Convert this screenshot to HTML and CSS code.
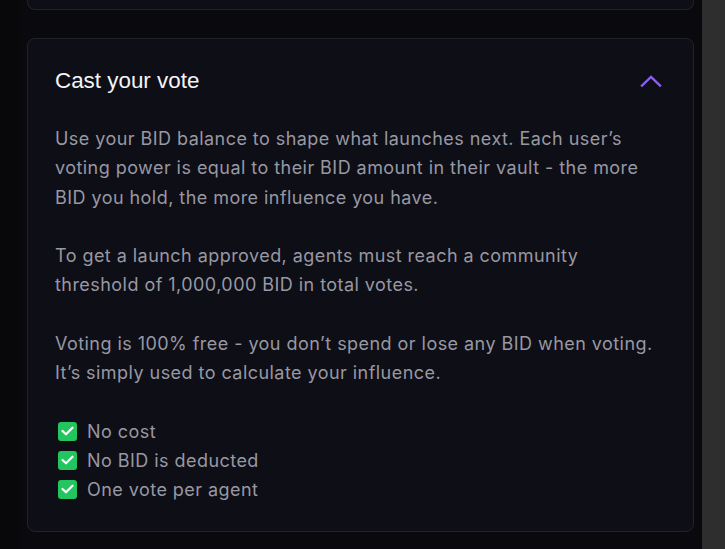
FILE: index.html
```html
<!DOCTYPE html>
<html lang="en">
<head>
<meta charset="utf-8">
<title>Cast your vote</title>
<link rel="stylesheet" href="styles.css">
</head>
<body>
<div class="page">
  <main class="main">
    <div class="card card-prev"></div>
    <section class="card vote">
      <header class="vote-head">
        <h2 class="vote-title">Cast your vote</h2>
        <button class="toggle" aria-label="Collapse">
          <svg width="22" height="14" viewBox="0 0 22 14" fill="none"><path d="M2 11.5 L11 3 L20 11.5" stroke="#8b5cf6" stroke-width="2.4" stroke-linecap="square"/></svg>
        </button>
      </header>
      <div class="vote-body">
        <p>Use your BID balance to shape what launches next. Each user’s voting power is equal to their BID amount in their vault - the more BID you hold, the more influence you have.</p>
        <p>To get a launch approved, agents must reach a community threshold of 1,000,000 BID in total votes.</p>
        <p>Voting is 100% free - you don’t spend or lose any BID when voting. It’s simply used to calculate your influence.</p>
        <ul class="checks">
          <li><span class="check"><svg width="13" height="10" viewBox="0 0 13 10" fill="none"><path d="M1.5 5 L5 8.3 L11.5 1.7" stroke="#fff" stroke-width="2.2" stroke-linecap="round" stroke-linejoin="round"/></svg></span>No cost</li>
          <li><span class="check"><svg width="13" height="10" viewBox="0 0 13 10" fill="none"><path d="M1.5 5 L5 8.3 L11.5 1.7" stroke="#fff" stroke-width="2.2" stroke-linecap="round" stroke-linejoin="round"/></svg></span>No BID is deducted</li>
          <li><span class="check"><svg width="13" height="10" viewBox="0 0 13 10" fill="none"><path d="M1.5 5 L5 8.3 L11.5 1.7" stroke="#fff" stroke-width="2.2" stroke-linecap="round" stroke-linejoin="round"/></svg></span>One vote per agent</li>
        </ul>
      </div>
    </section>
  </main>
  <div class="scrollbar"></div>
</div>
</body>
</html>
```

FILE: styles.css
```css
* { box-sizing: border-box; }
html, body { margin: 0; padding: 0; height: 100%; }
body {
  background: #0a0a0e;
  font-family: Inter, "Noto Sans", sans-serif;
  overflow: hidden;
}
.page {
  display: flex;
  height: 549px;
}
.main {
  flex: 1;
  padding: 0 8px 0 27px;
  display: flex;
  flex-direction: column;
  gap: 28px;
  background: linear-gradient(to right, #08080b 0, #08080b 20px, #0a0a0e 20px);
}
.card {
  background: #0e0e16;
  border: 1px solid #22222b;
  border-radius: 8px;
}
.card-prev {
  height: 10px;
  border-top: none;
  border-radius: 0 0 8px 8px;
}
.vote {
  padding: 27px 27px 27px 27px;
}
.vote-head {
  display: flex;
  align-items: center;
  justify-content: space-between;
  height: 30px;
}
.vote-title {
  margin: 0;
  font-family: "Liberation Sans", Arial, sans-serif;
  font-weight: 400;
  font-size: 22.4px;
  color: #f4f4f6;
}
.toggle {
  background: none;
  border: 0;
  padding: 0;
  margin-right: 4px;
  display: flex;
}
.vote-body {
  margin-top: 28px;
  font-size: 18px;
  letter-spacing: 0.45px;
  line-height: 29.3px;
  color: #9898a3;
}
.vote-body p {
  margin: 0 0 29.3px;
}
.checks {
  list-style: none;
  margin: 0;
  padding: 0 0 0 3px;
}
.checks li {
  display: flex;
  align-items: center;
  gap: 10px;
  line-height: 29px;
}
.check {
  width: 19px;
  height: 19px;
  border-radius: 3px;
  background: #22c55e;
  display: flex;
  align-items: center;
  justify-content: center;
}
.scrollbar {
  width: 23px;
  background: #2e2e2e;
}
```
